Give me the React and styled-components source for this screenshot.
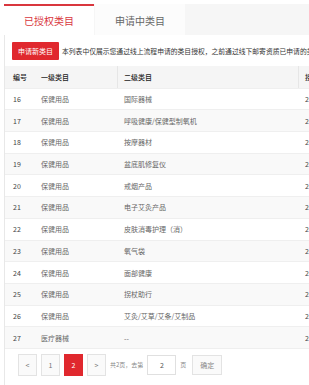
import React from 'react'
import styled, { createGlobalStyle } from 'styled-components'

const GlobalStyle = createGlobalStyle`
    body {
        margin: 0;
        background: #ffffff;
        font-family: "Noto Sans CJK SC", "Noto Sans", sans-serif;
        overflow: hidden;
    }
`;

const rows = [
    { id: 16, first: '保健用品', second: '国际器械' },
    { id: 17, first: '保健用品', second: '呼吸健康/保健型制氧机' },
    { id: 18, first: '保健用品', second: '按摩器材' },
    { id: 19, first: '保健用品', second: '盆底肌修复仪' },
    { id: 20, first: '保健用品', second: '戒烟产品' },
    { id: 21, first: '保健用品', second: '电子艾灸产品' },
    { id: 22, first: '保健用品', second: '皮肤消毒护理（消）' },
    { id: 23, first: '保健用品', second: '氧气袋' },
    { id: 24, first: '保健用品', second: '面部健康' },
    { id: 25, first: '保健用品', second: '拐杖助行' },
    { id: 26, first: '保健用品', second: '艾灸/艾草/艾条/艾制品' },
    { id: 27, first: '医疗器械', second: '--' },
]

const App = () => (
    <Page>
        <GlobalStyle />
        <TabBar>
            <Tab active>已授权类目</Tab>
            <Tab>申请中类目</Tab>
        </TabBar>
        <Panel>
            <Notice>
                <RedButton>申请新类目</RedButton>
                <NoticeText>本列表中仅展示您通过线上流程申请的类目授权，之前通过线下邮寄资质已申请的类目授权请联系客服查询</NoticeText>
            </Notice>
            <Table>
                <HeadRow>
                    <Cell w={29}>编号</Cell>
                    <Cell w={83}>一级类目</Cell>
                    <Cell w={181} sep>二级类目</Cell>
                    <Cell w={120} sep>授权时间</Cell>
                </HeadRow>
                {rows.map((r, i) => (
                    <Row key={r.id} striped={i % 2 === 1}>
                        <Cell w={29}>{r.id}</Cell>
                        <Cell w={83} muted>{r.first}</Cell>
                        <Cell w={181} muted>{r.second}</Cell>
                        <Cell w={120}>2020-03-12 10:21:33</Cell>
                    </Row>
                ))}
            </Table>
            <Pager>
                <PageBtn>&lt;</PageBtn>
                <PageBtn>1</PageBtn>
                <PageBtn current>2</PageBtn>
                <PageBtn>&gt;</PageBtn>
                <PagerText>共2页，去第</PagerText>
                <PageInput>2</PageInput>
                <PagerText>页</PagerText>
                <ConfirmBtn>确定</ConfirmBtn>
            </Pager>
        </Panel>
    </Page>
)

const Page = styled.div`
    width: 309px;
    height: 385px;
    padding: 4px 0 0 4px;
    box-sizing: border-box;
    overflow: hidden;
`;
const TabBar = styled.div`
    display: flex;
    height: 31px;
    background: #f6f6f6;
    width: 420px;
`;
const Tab = styled.div`
    width: 90px;
    display: flex;
    align-items: center;
    justify-content: center;
    box-sizing: border-box;
    margin-right: 1px;
    font-size: 10px;
    color: ${p => (p.active ? '#d9363e' : '#666')};
    background: ${p => (p.active ? '#ffffff' : '#fcfcfc')};
    border-top: 2px solid ${p => (p.active ? '#d9363e' : 'transparent')};
`;
const Panel = styled.div`
    border-left: 1px solid #e8e8e8;
    border-bottom: 1px solid #e8e8e8;
    width: 420px;
`;
const Notice = styled.div`
    display: flex;
    align-items: center;
    padding: 7px 0 0 7px;
    gap: 3px;
`;
const RedButton = styled.div`
    height: 18px;
    padding: 0 6px;
    background: #e0282e;
    color: #fff;
    font-size: 7px;
    display: flex;
    align-items: center;
    border-radius: 1px;
`;
const NoticeText = styled.div`
    font-size: 6.8px;
    color: #333;
    white-space: nowrap;
`;
const Table = styled.div`
    margin-top: 6px;
`;
const Row = styled.div`
    display: flex;
    height: 21.7px;
    align-items: stretch;
    background: ${p => (p.striped ? '#f9f9f9' : '#ffffff')};
    border-top: 1px solid #efefef;
    box-sizing: border-box;
    font-size: 7px;
    color: #444;
`;
const HeadRow = styled(Row)`
    background: #f5f5f5;
    border-top: none;
    color: #222;
    font-weight: 500;
`;
const Cell = styled.div`
    width: ${p => p.w}px;
    flex-shrink: 0;
    box-sizing: border-box;
    padding-left: 6px;
    display: flex;
    align-items: center;
    white-space: nowrap;
    color: ${p => (p.muted ? '#666' : 'inherit')};
    border-left: 1px solid ${p => (p.sep ? '#e6e6e6' : 'transparent')};
    &:first-child {
        padding-left: 7px;
    }
`;
const Pager = styled.div`
    display: flex;
    align-items: center;
    padding: 5px 0 9px 13px;
    border-top: 1px solid #efefef;
    gap: 4px;
`;
const PageBtn = styled.div`
    width: 19px;
    height: 22px;
    box-sizing: border-box;
    display: flex;
    align-items: center;
    justify-content: center;
    font-size: 7px;
    border: 1px solid ${p => (p.current ? '#e0282e' : '#e3e3e3')};
    background: ${p => (p.current ? '#e0282e' : '#fafafa')};
    color: ${p => (p.current ? '#fff' : '#777')};
`;
const PagerText = styled.div`
    font-size: 6px;
    color: #888;
`;
const PageInput = styled.div`
    width: 29px;
    height: 20px;
    box-sizing: border-box;
    border: 1px solid #e0e0e0;
    font-size: 7px;
    color: #555;
    display: flex;
    align-items: center;
    justify-content: center;
`;
const ConfirmBtn = styled.div`
    width: 30px;
    height: 20px;
    margin-left: 2px;
    box-sizing: border-box;
    border: 1px solid #e3e3e3;
    background: #fafafa;
    font-size: 7px;
    color: #888;
    display: flex;
    align-items: center;
    justify-content: center;
`;

export default App
